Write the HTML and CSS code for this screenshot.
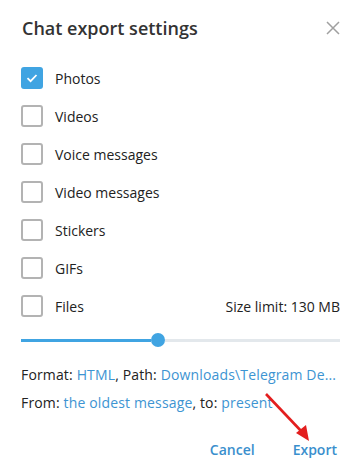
FILE: index.html
```html
<!DOCTYPE html>
<html lang="en">
<head>
    <meta charset="UTF-8">
    <meta name="viewport" content="width=device-width, initial-scale=1.0">
    <title>Chat export settings</title>
    <link rel="stylesheet" href="styles.css">
</head>
<body>
    <div class="box">
        <div class="header">
            <h1>Chat export settings</h1>
            <svg class="close" width="14" height="14" viewBox="0 0 14 14">
                <path d="M1 1 L13 13 M13 1 L1 13" stroke="#a0a0a0" stroke-width="1.5" fill="none"/>
            </svg>
        </div>

        <!-- Media types -->
        <div class="options">
            <div class="row">
                <span class="check on">
                    <svg width="14" height="14" viewBox="0 0 14 14"><path d="M2.5 7.2 L5.6 10.2 L11.5 4" stroke="#fff" stroke-width="1.8" fill="none"/></svg>
                </span>
                <span class="label">Photos</span>
            </div>
            <div class="row"><span class="check"></span><span class="label">Videos</span></div>
            <div class="row"><span class="check"></span><span class="label">Voice messages</span></div>
            <div class="row"><span class="check"></span><span class="label">Video messages</span></div>
            <div class="row"><span class="check"></span><span class="label">Stickers</span></div>
            <div class="row"><span class="check"></span><span class="label">GIFs</span></div>
            <div class="row">
                <span class="check"></span><span class="label">Files</span>
                <span class="limit">Size limit: 130 MB</span>
            </div>
        </div>

        <div class="slider">
            <div class="fill"></div>
            <div class="knob"></div>
            <div class="rest"></div>
        </div>

        <div class="info">
            <p>Format: <a>HTML</a>, Path: <a>Downloads\Telegram De...</a></p>
            <p>From: <a>the oldest message</a>, to: <a>present</a></p>
        </div>

        <div class="buttons">
            <button class="btn">Cancel</button>
            <button class="btn">Export</button>
        </div>

        <!-- red arrow pointing at Export -->
        <svg class="arrow" width="361" height="475" viewBox="0 0 361 475">
            <line x1="266" y1="394" x2="303" y2="433" stroke="#e31e1e" stroke-width="2.6"/>
            <path d="M309 441 L296 433 L306 425 Z" fill="#e31e1e"/>
        </svg>
    </div>
</body>
</html>
```

FILE: styles.css
```css
body {
    margin: 0;
    background-color: #fff;
    font-family: "Open Sans", Arial, sans-serif;
    font-size: 14px;
    color: #222;
}

.box {
    position: relative;
    width: 361px;
    height: 475px;
    overflow: hidden;
}

.header {
    height: 56px;
    display: flex;
    align-items: center;
    justify-content: space-between;
    padding: 0 21px 0 22px;
}

h1 {
    margin: 0;
    font-size: 18px;
    font-weight: 600;
    line-height: 24px;
    color: #333;
}

.close {
    display: block;
}

.options {
    padding-top: 3px;
}

.row {
    height: 38px;
    display: flex;
    align-items: center;
    padding: 0 21px;
}

.check {
    width: 22px;
    height: 22px;
    box-sizing: border-box;
    border: 2px solid #b3b3b3;
    border-radius: 3px;
    display: flex;
    align-items: center;
    justify-content: center;
}

.check.on {
    border: none;
    background-color: #40a4e2;
}

.label {
    margin-left: 12px;
}

.limit {
    margin-left: auto;
}

.slider {
    height: 30px;
    display: flex;
    align-items: center;
    padding: 0 21px;
}

.fill {
    width: 130px;
    height: 3px;
    background-color: #40a4e2;
}

.knob {
    width: 14px;
    height: 14px;
    border-radius: 50%;
    background-color: #40a4e2;
}

.rest {
    flex: 1;
    height: 3px;
    background-color: #e3e8ec;
}

.info {
    margin-top: 6px;
    padding: 0 21px;
}

.info p {
    margin: 0;
    line-height: 28px;
    letter-spacing: 0.15px;
    white-space: nowrap;
}

.info a {
    color: #3d94d2;
}

.buttons {
    margin-top: 14px;
    height: 36px;
    display: flex;
    justify-content: flex-end;
    align-items: center;
    gap: 38px;
    padding-right: 24px;
}

.btn {
    padding: 0;
    border: none;
    background: none;
    font-family: "Open Sans", Arial, sans-serif;
    font-size: 14px;
    font-weight: 600;
    color: #3a8fcd;
    cursor: pointer;
}

.arrow {
    position: absolute;
    left: 0;
    top: 0;
    pointer-events: none;
}
```
